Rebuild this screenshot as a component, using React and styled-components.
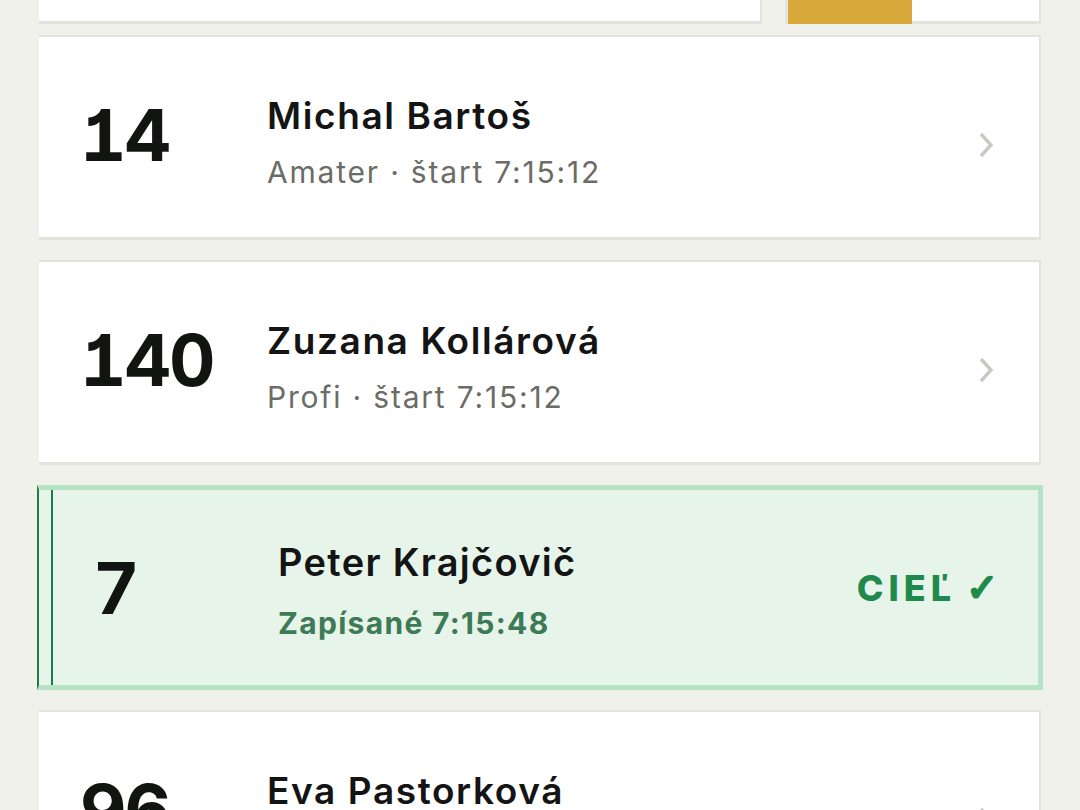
import React from "react";
import styled, { createGlobalStyle } from "styled-components";

const GlobalStyle = createGlobalStyle`
  body {
    margin: 0;
    background: #f1f1ec;
    font-family: Inter, "Noto Sans", sans-serif;
    color: #141414;
  }
`;

const riders = [
  { bib: "14", name: "Michal Bartoš", cat: "Amater", start: "7:15:12" },
  { bib: "140", name: "Zuzana Kollárová", cat: "Profi", start: "7:15:12" },
  { bib: "7", name: "Peter Krajčovič", logged: "7:15:48", finished: true },
  { bib: "96", name: "Eva Pastorková", cat: "Amater", start: "7:15:30" },
];

const Page = styled.div`
  padding: 0 39px 0 39px;
  height: 810px;
  overflow: hidden;
`;

// bottom edge of the summary row, scrolled mostly off screen
const Summary = styled.div`
  display: flex;
  gap: 23px;
  height: 24px;
  margin-bottom: 11px;
`;

const SummaryCard = styled.div`
  flex: ${(p) => p.$grow};
  display: flex;
  background: #fff;
  border: 2px solid #e3e3dd;
  border-top: none;
  border-left-width: ${(p) => (p.$split ? "3px" : "0")};
  border-bottom-width: 3px;
`;

const Progress = styled.div`
  width: 124px;
  background: #d9a93b;
  margin-bottom: -3px;
`;

const List = styled.div`
  display: flex;
  flex-direction: column;
  gap: 20px;
`;

const Card = styled.div`
  height: 205px;
  box-sizing: border-box;
  display: flex;
  align-items: center;
  background: #fff;
  border: 2px solid #e3e3dd;
  border-left: none;
  border-bottom-width: 3px;
  padding: 0 46px 0 41px;
`;

const DoneCard = styled(Card)`
  margin: 0 -2px;
  background: linear-gradient(
      to right,
      transparent 12px,
      #1f7a44 12px,
      #1f7a44 14px,
      transparent 14px
    ),
    #e7f4ea;
  border: 5px solid #b6e2c5;
  border-left: 2px solid #1f7a44;
  padding: 0 40px 0 54px;
`;

const Bib = styled.div`
  width: ${(p) => (p.$done ? "185px" : "187px")};
  flex-shrink: 0;
  font-size: 72px;
  font-weight: 700;
  letter-spacing: -2px;
  line-height: 1;
  color: #121412;
  font-feature-settings: "tnum", "cv01";
  margin-top: ${(p) => (p.$done ? "0" : "-4px")};
`;

const Info = styled.div`
  flex: 1;
  display: flex;
  flex-direction: column;
  gap: ${(p) => (p.$done ? "20px" : "16px")};
  margin-top: ${(p) => (p.$done ? "6px" : "10px")};
`;

const Name = styled.div`
  font-size: ${(p) => (p.$done ? "38px" : "37px")};
  font-weight: 600;
  line-height: 1.2;
  letter-spacing: ${(p) => (p.$done ? "1.3px" : "1.6px")};
  color: #141414;
`;

const Meta = styled.div`
  font-size: 30px;
  line-height: 1.2;
  color: #6c6c66;
  letter-spacing: 1.8px;
`;

const Logged = styled.div`
  font-size: 30px;
  font-weight: 700;
  line-height: 1.2;
  letter-spacing: 1.3px;
  color: #3d7a55;
`;

const Chevron = styled.svg`
  width: 14px;
  height: 26px;
  margin-top: 16px;
  flex-shrink: 0;
`;

const Finish = styled.div`
  display: flex;
  align-items: center;
  gap: 10px;
  font-size: 36px;
  font-weight: 800;
  letter-spacing: 5px;
  color: #1f8a4c;
`;

const Check = styled.span`
  font-family: "DejaVu Sans", sans-serif;
  font-size: 38px;
  font-weight: 700;
  letter-spacing: 0;
  -webkit-text-stroke: 2.5px #1f8a4c;
`;

const RiderRow = ({ rider }) => {
  if (rider.finished) {
    return (
      <DoneCard>
        <Bib $done>{rider.bib}</Bib>
        <Info $done>
          <Name $done>{rider.name}</Name>
          <Logged>Zapísané {rider.logged}</Logged>
        </Info>
        <Finish>
          CIEĽ <Check>✓</Check>
        </Finish>
      </DoneCard>
    );
  }
  return (
    <Card>
      <Bib>{rider.bib}</Bib>
      <Info>
        <Name>{rider.name}</Name>
        <Meta>
          {rider.cat} · štart {rider.start}
        </Meta>
      </Info>
      <Chevron viewBox="0 0 14 26">
        <polyline
          points="2,2 12,13 2,24"
          fill="none"
          stroke="#c8c8c0"
          strokeWidth="3.4"
        />
      </Chevron>
    </Card>
  );
};

const App = () => {
  return (
    <>
      <GlobalStyle />
      <Page>
        <Summary>
          <SummaryCard $grow="725" />
          <SummaryCard $grow="253" $split>
            <Progress />
          </SummaryCard>
        </Summary>
        <List>
          {riders.map((r) => (
            <RiderRow key={r.bib} rider={r} />
          ))}
        </List>
      </Page>
    </>
  );
};

export default App;
